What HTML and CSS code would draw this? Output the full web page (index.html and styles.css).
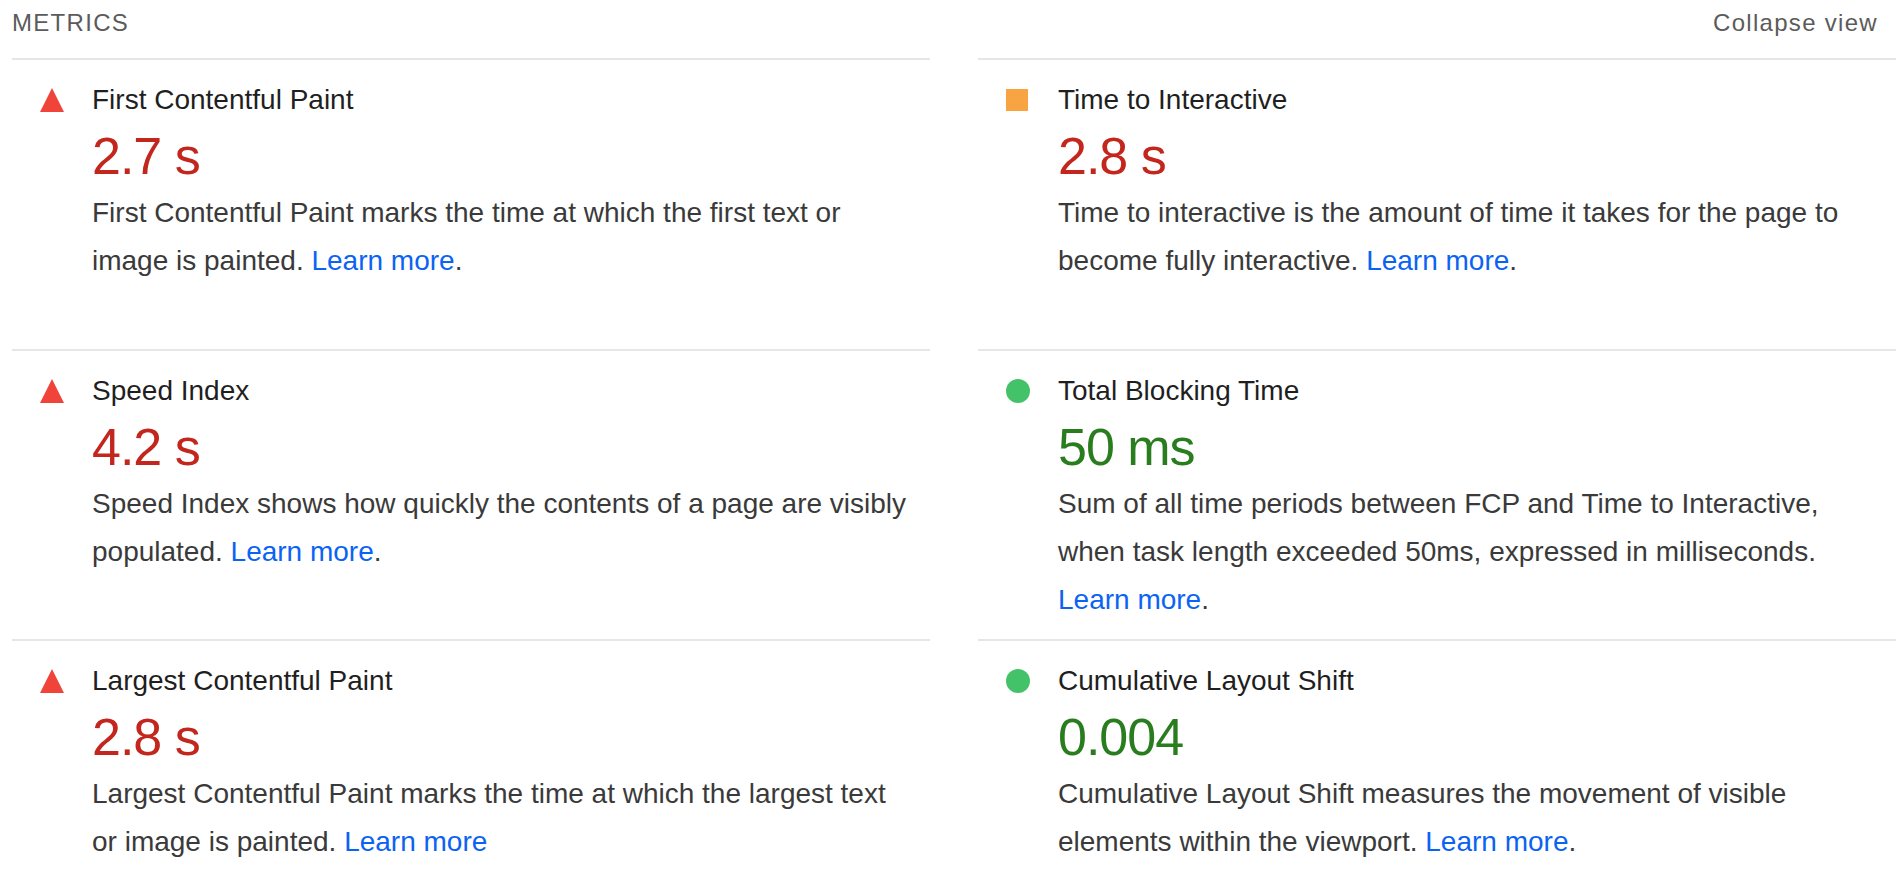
FILE: index.html
```html
<!DOCTYPE html>
<html lang="en">
<head>
<meta charset="utf-8">
<title>Metrics</title>
<link rel="stylesheet" href="styles.css">
</head>
<body>
<div class="metrics">
  <div class="metrics-header">
    <span class="metrics-title">Metrics</span>
    <span class="metrics-toggle">Collapse view</span>
  </div>
  <div class="metrics-grid">
    <div class="metric">
      <div class="metric-icon"><svg class="icon-fail" viewBox="0 0 24 24" width="24" height="24"><polygon points="12,0 24,24 0,24"/></svg></div>
      <div class="metric-body">
        <div class="metric-name">First Contentful Paint</div>
        <div class="metric-value fail">2.7&nbsp;s</div>
        <div class="metric-desc">First Contentful Paint marks the time at which the first text or image is painted. <a class="link">Learn more</a>.</div>
      </div>
    </div>
    <div class="metric">
      <div class="metric-icon"><span class="icon-average"></span></div>
      <div class="metric-body">
        <div class="metric-name">Time to Interactive</div>
        <div class="metric-value fail">2.8&nbsp;s</div>
        <div class="metric-desc">Time to interactive is the amount of time it takes for the page to become fully interactive. <a class="link">Learn more</a>.</div>
      </div>
    </div>
    <div class="metric">
      <div class="metric-icon"><svg class="icon-fail" viewBox="0 0 24 24" width="24" height="24"><polygon points="12,0 24,24 0,24"/></svg></div>
      <div class="metric-body">
        <div class="metric-name">Speed Index</div>
        <div class="metric-value fail">4.2&nbsp;s</div>
        <div class="metric-desc">Speed Index shows how quickly the contents of a page are visibly populated. <a class="link">Learn more</a>.</div>
      </div>
    </div>
    <div class="metric">
      <div class="metric-icon"><span class="icon-pass"></span></div>
      <div class="metric-body">
        <div class="metric-name">Total Blocking Time</div>
        <div class="metric-value pass">50&nbsp;ms</div>
        <div class="metric-desc">Sum of all time periods between FCP and Time to Interactive, when task length exceeded 50ms, expressed in milliseconds. <a class="link">Learn more</a>.</div>
      </div>
    </div>
    <div class="metric">
      <div class="metric-icon"><svg class="icon-fail" viewBox="0 0 24 24" width="24" height="24"><polygon points="12,0 24,24 0,24"/></svg></div>
      <div class="metric-body">
        <div class="metric-name">Largest Contentful Paint</div>
        <div class="metric-value fail">2.8&nbsp;s</div>
        <div class="metric-desc">Largest Contentful Paint marks the time at which the largest text or image is painted. <a class="link">Learn more</a></div>
      </div>
    </div>
    <div class="metric">
      <div class="metric-icon"><span class="icon-pass"></span></div>
      <div class="metric-body">
        <div class="metric-name">Cumulative Layout Shift</div>
        <div class="metric-value pass">0.004</div>
        <div class="metric-desc">Cumulative Layout Shift measures the movement of visible elements within the viewport. <a class="link">Learn more</a>.</div>
      </div>
    </div>
  </div>
</div>
</body>
</html>
```

FILE: styles.css
```css
html, body {
  margin: 0;
  padding: 0;
  background: #ffffff;
}

body {
  font-family: "Liberation Sans", Arial, Helvetica, sans-serif;
  color: #212121;
}

.metrics {
  padding: 0 6px 0 12px;
}

.metrics-header {
  height: 58px;
  display: flex;
  justify-content: space-between;
  align-items: flex-start;
  font-size: 24px;
  line-height: 46px;
  color: #5b5b5b;
  letter-spacing: 1.3px;
  padding-right: 18px;
  box-sizing: border-box;
}

.metrics-title {
  text-transform: uppercase;
}

.metrics-grid {
  display: grid;
  grid-template-columns: 1fr 1fr;
  column-gap: 48px;
  grid-auto-rows: 290.5px;
}

.metric {
  border-top: 2px solid #e6e6e6;
  padding-top: 16px;
  display: grid;
  grid-template-columns: 80px 1fr;
  align-items: start;
}

.metric-icon {
  height: 48px;
  display: flex;
  align-items: center;
  justify-content: center;
}

.icon-fail {
  display: block;
  fill: #f0433a;
}

.icon-average {
  display: block;
  width: 22px;
  height: 22px;
  margin-left: -2px;
  background: #f9a443;
}

.icon-pass {
  display: block;
  width: 24px;
  height: 24px;
  border-radius: 50%;
  background: #44c26a;
}

.metric-body {
  padding-right: 16px;
}

.metric-name {
  font-size: 28px;
  line-height: 48px;
  color: #1f1f1f;
}

.metric-value {
  font-size: 52px;
  line-height: 65px;
  letter-spacing: -1px;
}

.metric-value.fail {
  color: #c2261c;
}

.metric-value.pass {
  color: #2a7d1f;
}

.metric-desc {
  font-size: 28px;
  line-height: 48px;
  color: #3a3a3a;
}

.link {
  color: #0b63f3;
  text-decoration: none;
}
```
